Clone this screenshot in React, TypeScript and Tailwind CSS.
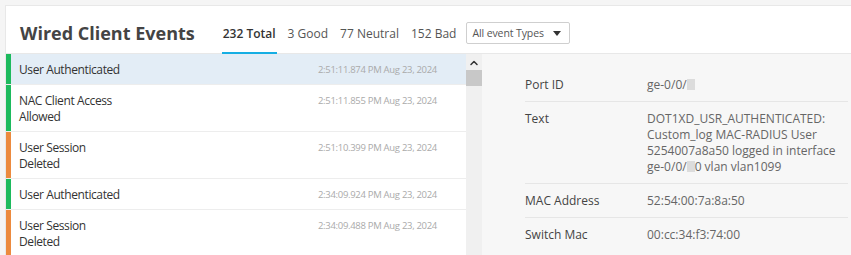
import { ChevronUp } from 'lucide-react';

type EventRow = {
  lines: string[];
  time: string;
  tone: 'good' | 'bad';
  active?: boolean;
};

const events: EventRow[] = [
  { lines: ['User Authenticated'], time: '2:51:11.874 PM Aug 23, 2024', tone: 'good', active: true },
  { lines: ['NAC Client Access', 'Allowed'], time: '2:51:11.855 PM Aug 23, 2024', tone: 'good' },
  { lines: ['User Session', 'Deleted'], time: '2:51:10.399 PM Aug 23, 2024', tone: 'bad' },
  { lines: ['User Authenticated'], time: '2:34:09.924 PM Aug 23, 2024', tone: 'good' },
  { lines: ['User Session', 'Deleted'], time: '2:34:09.488 PM Aug 23, 2024', tone: 'bad' },
];

const Masked = () => <span className="inline-block w-[8px] h-[11px] bg-[#dcdcdc] align-[-1px]" />;

const DetailRow = ({ label, children, last }: { label: string; children: React.ReactNode; last?: boolean }) => (
  <div className={`flex pt-[9px] pb-[8px] ${last ? '' : 'border-b border-[#e6e6e6]'}`}>
    <div className="w-[122px] shrink-0 text-[#444]">{label}</div>
    <div className="text-[#666]">{children}</div>
  </div>
);

export default function App() {
  return (
    <div className="w-[851px] h-[255px] overflow-hidden bg-[#f5f5f5] pt-[5px] pl-[5px] text-[12px] leading-[16px]" style={{ fontFamily: '"Open Sans", "Noto Sans", sans-serif' }}>
      <div className="bg-white border-t border-l border-[#e8e8e8] h-full flex flex-col">
        <div className="h-[48px] flex items-end border-b border-[#e8e8e8] shrink-0">
          <h1 className="ml-[14px] mb-[8px] text-[18px] leading-[24px] font-bold text-[#444]">Wired Client Events</h1>
          <div className="ml-[27px] flex items-end text-[12px] text-[#555]">
            <div className="px-[1px] pb-[10px] border-b-[2px] border-[#16aee3] font-semibold text-[#333] -mb-[1px]">232 Total</div>
            <div className="ml-[11px] pb-[11px]">3 Good</div>
            <div className="ml-[12px] pb-[11px]">77 Neutral</div>
            <div className="ml-[12px] pb-[11px]">152 Bad</div>
            <div className="ml-[10px] mb-[9px] w-[104px] h-[22px] border border-[#cfcfcf] rounded-[2px] flex items-center justify-between pl-[5px] pr-[8px] text-[10.5px] tracking-[-0.1px] whitespace-nowrap text-[#555]">
              <span>All event Types</span>
              <span className="w-0 h-0 border-l-[4px] border-r-[4px] border-t-[5px] border-l-transparent border-r-transparent border-t-[#333]" />
            </div>
          </div>
        </div>
        <div className="flex flex-1 min-h-0">
          <div className="w-[460px] shrink-0">
            {events.map((e, i) => (
              <div key={i} className={`flex border-b border-[#ededed] ${e.active ? 'bg-[#e3edf6]' : 'bg-white'}`}>
                <div className={`w-[5px] shrink-0 ${e.tone === 'good' ? 'bg-[#1dba5d]' : 'bg-[#ec8a3e]'}`} />
                <div className="flex-1 flex justify-between pl-[8px] pr-[29px] pt-[8px] pb-[6px]">
                  <div className="text-[#333] tracking-[-0.4px]">
                    {e.lines.map((l) => (
                      <div key={l}>{l}</div>
                    ))}
                  </div>
                  <div className="text-[9.5px] tracking-[-0.3px] text-[#aaa] leading-[16px]">{e.time}</div>
                </div>
              </div>
            ))}
          </div>
          <div className="w-[16px] shrink-0 bg-[#f0f0f0] flex flex-col items-center">
            <ChevronUp className="w-[12px] h-[12px] mt-[3px] text-[#333]" strokeWidth={3} />
            <div className="mt-[1px] w-full h-[16px] bg-[#c8c8c8]" />
          </div>
          <div className="flex-1 bg-[#f7f7f7] pl-[43px] pr-[3px] pt-[14px]">
            <DetailRow label="Port ID">
              ge-0/0/<Masked />
            </DetailRow>
            <DetailRow label="Text">
              DOT1XD_USR_AUTHENTICATED:
              <br />
              Custom_log MAC-RADIUS User
              <br />
              5254007a8a50 logged in interface
              <br />
              ge-0/0/<Masked />0 vlan vlan1099
            </DetailRow>
            <DetailRow label="MAC Address">52:54:00:7a:8a:50</DetailRow>
            <DetailRow label="Switch Mac" last>
              00:cc:34:f3:74:00
            </DetailRow>
          </div>
        </div>
      </div>
    </div>
  );
}
